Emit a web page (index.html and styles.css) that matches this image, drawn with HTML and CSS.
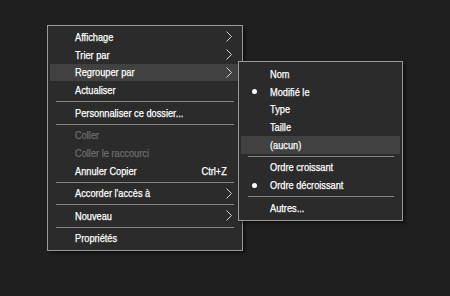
FILE: index.html
```html
<!DOCTYPE html>
<html lang="fr">
<head>
<meta charset="utf-8">
<link rel="stylesheet" href="styles.css">
</head>
<body>
<div class="desk">
  <div class="menu main">
    <div class="item"><span class="label"><span class="txt">Affichage</span></span><svg class="chev" viewBox="0 0 6 11"><polyline points="0.5,0.5 5.5,5.5 0.5,10.5"/></svg></div>
    <div class="item"><span class="label"><span class="txt">Trier par</span></span><svg class="chev" viewBox="0 0 6 11"><polyline points="0.5,0.5 5.5,5.5 0.5,10.5"/></svg></div>
    <div class="item hot"><span class="label"><span class="txt">Regrouper par</span></span><svg class="chev" viewBox="0 0 6 11"><polyline points="0.5,0.5 5.5,5.5 0.5,10.5"/></svg></div>
    <div class="item"><span class="label"><span class="txt">Actualiser</span></span></div>
    <div class="sep"></div>
    <div class="item"><span class="label"><span class="txt">Personnaliser ce dossier...</span></span></div>
    <div class="sep"></div>
    <div class="item off"><span class="label"><span class="txt">Coller</span></span></div>
    <div class="item off"><span class="label"><span class="txt">Coller le raccourci</span></span></div>
    <div class="item"><span class="label"><span class="txt">Annuler Copier</span></span><span class="key">Ctrl+Z</span></div>
    <div class="sep"></div>
    <div class="item"><span class="label"><span class="txt">Accorder l'accès à</span></span><svg class="chev" viewBox="0 0 6 11"><polyline points="0.5,0.5 5.5,5.5 0.5,10.5"/></svg></div>
    <div class="sep"></div>
    <div class="item"><span class="label"><span class="txt">Nouveau</span></span><svg class="chev" viewBox="0 0 6 11"><polyline points="0.5,0.5 5.5,5.5 0.5,10.5"/></svg></div>
    <div class="sep"></div>
    <div class="item"><span class="label"><span class="txt">Propriétés</span></span></div>
  </div>
  <div class="menu sub">
    <div class="item"><span class="mark"></span><span class="label"><span class="txt">Nom</span></span></div>
    <div class="item"><span class="mark on"></span><span class="label"><span class="txt">Modifié le</span></span></div>
    <div class="item"><span class="mark"></span><span class="label"><span class="txt">Type</span></span></div>
    <div class="item"><span class="mark"></span><span class="label"><span class="txt">Taille</span></span></div>
    <div class="item hot"><span class="mark"></span><span class="label"><span class="txt">(aucun)</span></span></div>
    <div class="sep"></div>
    <div class="item"><span class="mark"></span><span class="label"><span class="txt">Ordre croissant</span></span></div>
    <div class="item"><span class="mark on"></span><span class="label"><span class="txt">Ordre décroissant</span></span></div>
    <div class="sep"></div>
    <div class="item"><span class="mark"></span><span class="label"><span class="txt">Autres...</span></span></div>
  </div>
</div>
</body>
</html>
```
FILE: styles.css
```css
html, body {
  margin: 0;
  padding: 0;
  background: #1f1f1f;
  width: 450px;
  height: 296px;
  overflow: hidden;
}
.desk {
  position: relative;
  width: 450px;
  height: 296px;
  padding: 25px 0 0 47px;
  box-sizing: border-box;
  font-family: "Liberation Sans", Arial, sans-serif;
  font-size: 10.5px;
  color: #ffffff;
  -webkit-text-stroke: 0.25px currentColor;
}
.menu {
  background: #2b2b2b;
  border: 1px solid #9a9a9a;
  box-shadow: 2px 2px 3px rgba(0,0,0,0.55);
  box-sizing: border-box;
  display: flex;
  flex-direction: column;
}
.main {
  width: 196px;
  padding: 2px 2px 3px 2px;
}
.sub {
  position: absolute;
  left: 238px;
  top: 61px;
  width: 165px;
  padding: 3px 2px 3px 2px;
}
.item {
  height: 17.75px;
  display: flex;
  align-items: center;
  padding: 0 8px 0 25px;
}
.sub .item {
  padding-left: 11px;
}
.item .label {
  flex: 1;
  white-space: nowrap;
}
.txt {
  display: inline-block;
  transform: scaleX(0.88);
  transform-origin: left center;
}
.hot {
  background: #414141;
}
.off {
  color: #6e6e6e;
}
.key {
  display: inline-block;
  white-space: nowrap;
  margin-right: 5px;
  transform: scaleX(0.88);
  transform-origin: right center;
}
.chev {
  width: 6px;
  height: 11px;
  fill: none;
  stroke: #d0d0d0;
  stroke-width: 1;
}
.mark {
  width: 5px;
  height: 5px;
  border-radius: 50%;
  margin-right: 13px;
}
.mark.on {
  background: #ffffff;
}
.sep {
  height: 1px;
  background: #858585;
  margin: 2px 6px 1.75px 6px;
}
.sub .sep {
  margin: 2px 6px 1.75px 7px;
}
```
